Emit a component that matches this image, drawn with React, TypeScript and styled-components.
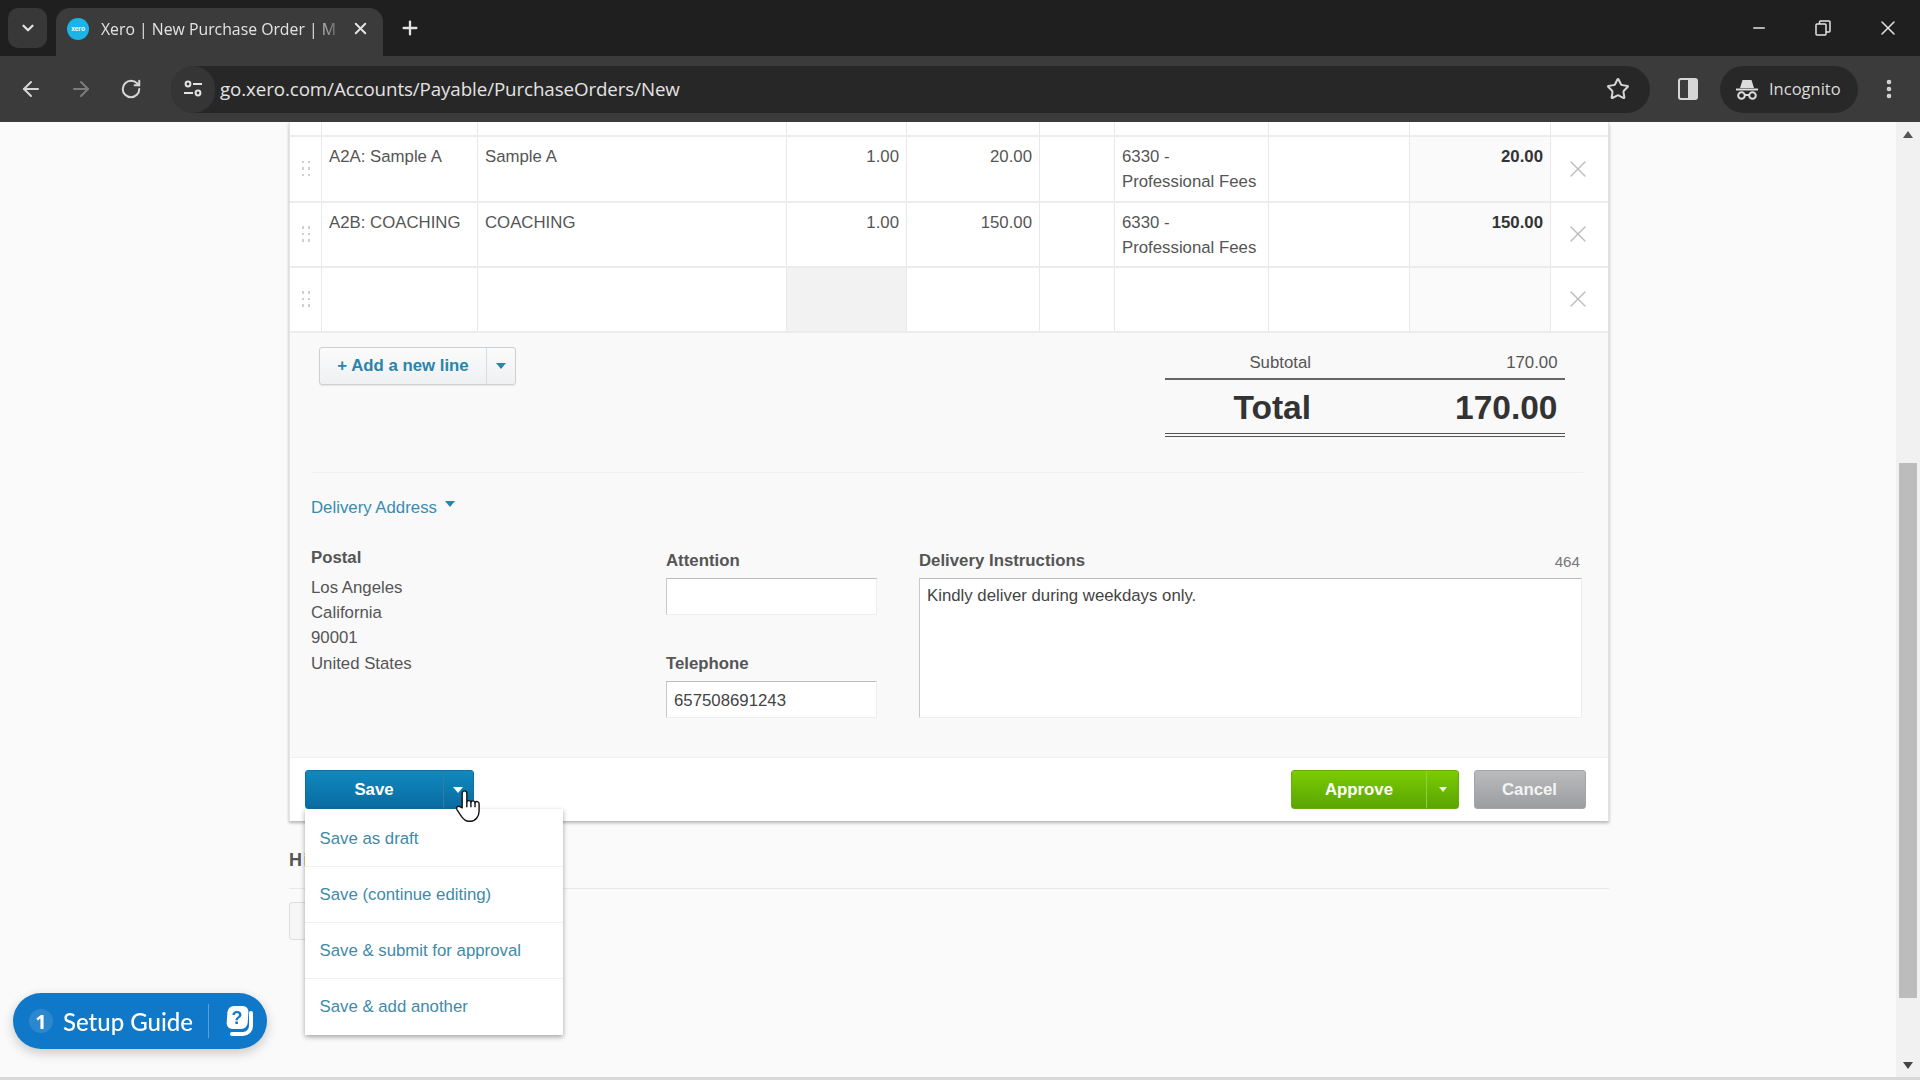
import React from "react";
import styled, { createGlobalStyle } from "styled-components";
import { ArrowLeft, ArrowRight, RotateCw, Star, EllipsisVertical, Minus, X, Plus, ChevronDown } from "lucide-react";

const Global = createGlobalStyle`
  html, body { margin: 0; padding: 0; height: 100%; overflow: hidden; background: #fafafa; }
  * { box-sizing: border-box; }
  body { font-family: "Liberation Sans", Arial, sans-serif; }
`;

const Shell = styled.div`
  width: 1920px; height: 1080px; display: flex; flex-direction: column; overflow: hidden;
`;
const TabStrip = styled.div`
  height: 56px; background: #1f1f1f; display: flex; align-items: flex-end; padding-left: 8px; color: #e3e3e3;
`;
const TabSwitcher = styled.div`
  width: 39px; height: 40px; margin-bottom: 8px; margin-right: 9px; background: #383838; border-radius: 10px;
  display: flex; align-items: center; justify-content: center;
`;
const Tab = styled.div`
  width: 327px; height: 48px; background: #3b3b3b; border-radius: 14px 14px 0 0; display: flex; align-items: center; padding: 0 12px 7px 11px;
  font: 400 15.8px "Open Sans", "Noto Sans", sans-serif;
`;
const Favicon = styled.div`
  width: 22px; height: 22px; border-radius: 50%; background: #19b5e6; color: #fff; font: 700 6.5px "Liberation Sans", sans-serif;
  display: flex; align-items: center; justify-content: center; margin-right: 12px; flex: none;
`;
const TabTitle = styled.div`
  width: 237px; white-space: nowrap; mask-image: linear-gradient(to right, #000 90%, rgba(0,0,0,.25) 100%);
`;
const TabClose = styled.div`
  width: 22px; margin-left: 11px; display: flex; justify-content: center;
`;
const NewTab = styled.div`
  width: 54px; height: 48px; padding-bottom: 8px; display: flex; align-items: center; justify-content: center;
`;
const Spacer = styled.div`flex: 1;`;
const WindowButton = styled.div`
  width: 64.5px; height: 56px; display: flex; align-items: center; justify-content: center;
`;
const Toolbar = styled.div`
  height: 66px; background: #3b3b3b; display: flex; align-items: center; padding-left: 6px; color: #d6d6d6;
`;
const NavSlot = styled.div<{ $dim?: boolean }>`
  width: 50px; display: flex; justify-content: center; color: ${p => (p.$dim ? "#7c7c7c" : "#d6d6d6")};
`;
const Address = styled.div`
  margin-left: 15px; width: 1479px; height: 47px; background: #272727; border-radius: 24px; display: flex; align-items: center; padding-right: 20px;
`;
const SiteChip = styled.div`
  width: 44px; height: 47px; border-radius: 24px; background: #353535; display: flex; align-items: center; justify-content: center; flex: none;
`;
const Url = styled.div`
  margin-left: 5px; padding-bottom: 2px; flex: 1; font: 400 18.75px "Open Sans", "Noto Sans", sans-serif; color: #e3e3e3; letter-spacing: -0.1px;
`;
const PanelSlot = styled.div`
  width: 70px; padding-left: 6px; display: flex; justify-content: center;
`;
const IncognitoPill = styled.div`
  width: 137.5px; height: 47px; border-radius: 24px; background: #282828; display: flex; align-items: center; padding-left: 15px; gap: 10px;
  font: 400 16.5px "Open Sans", "Noto Sans", sans-serif; color: #dcdcdc;
`;
const IncognitoLabel = styled.span`
  padding-bottom: 2px;
`;
const MenuSlot = styled.div`
  flex: 1; display: flex; justify-content: center;
`;

const PageArea = styled.div`
  height: 955px; display: flex; background: #fafafa;
`;
const Main = styled.main`
  flex: 1; padding-left: 289px; overflow: hidden;
`;
const Card = styled.section`
  width: 1320px; background: #f9f9fa; border-right: 1px solid #e4e4e4; border-left: 1px solid #e4e4e4; box-shadow: 0 2px 3px rgba(0,0,0,.28);
`;
const Row = styled.div<{ $h: number }>`
  display: grid; grid-template-columns: 32px 156px 309px 120px 133px 75px 154px 141px 141px 57px;
  height: ${p => p.$h}px; background: #fff; border-bottom: 2px solid #ececec;
`;
const Cell = styled.div<{ $right?: boolean; $bold?: boolean; $bg?: string; $last?: boolean }>`
  padding: 7px 7px 0 7px; font-size: 16.8px; line-height: 25px; color: ${p => (p.$bold ? "#333" : "#555")};
  font-weight: ${p => (p.$bold ? 700 : 400)}; text-align: ${p => (p.$right ? "right" : "left")};
  background: ${p => p.$bg || "transparent"}; border-right: ${p => (p.$last ? "0" : "1.5px solid #e8e8ea")}; white-space: nowrap;
  overflow: hidden;
`;
const IconCell = styled.div<{ $last?: boolean }>`
  display: flex; align-items: center; justify-content: center; padding-right: ${p => (p.$last ? "4px" : "0")};
  border-right: ${p => (p.$last ? "0" : "1.5px solid #e8e8ea")}; color: #bdbdbd;
`;
const Grip = styled.div`
  display: grid; grid-template-columns: 2px 2px; gap: 4px 4px;
`;
const GripDot = styled.span`
  width: 2.5px; height: 2.5px; background: #cfcfcf; display: block;
`;
const TotalsBand = styled.div`
  height: 140.5px; margin: 0 25px 0 21px; padding: 14.5px 18px 0 8px; display: flex; justify-content: space-between; align-items: flex-start; border-bottom: 1px solid #efefef;
`;
const SplitLight = styled.div`
  display: flex; height: 38px; width: 197px; border: 1px solid #ccd1d5; border-radius: 3px; background: linear-gradient(#fbfbfb, #eef0f2); box-shadow: 0 1px 1px rgba(0,0,0,.08);
`;
const AddLabel = styled.div`
  width: 167px; display: flex; align-items: center; justify-content: center; color: #2a84ab; font-weight: 700; font-size: 16.8px; border-right: 1px solid #d9dcdf;
`;
const CaretArea = styled.div`
  flex: 1; display: flex; align-items: center; justify-content: center;
`;
const Caret = styled.span<{ $color: string; $size?: number }>`
  display: block; width: 0; height: 0; border-left: ${p => p.$size ?? 5}px solid transparent; border-right: ${p => p.$size ?? 5}px solid transparent;
  border-top: ${p => (p.$size ?? 5) + 1}px solid ${p => p.$color};
`;
const Totals = styled.div`
  width: 400px;
`;
const SubtotalRow = styled.div`
  height: 33px; display: grid; grid-template-columns: 146px 1fr; padding: 0 7.5px 0 0; align-items: center; font-size: 16.8px; color: #555; text-align: right; border-bottom: 2px solid #666;
`;
const TotalRow = styled.div`
  height: 57px; display: grid; grid-template-columns: 146px 1fr; padding: 3px 7.5px 0 0; align-items: center; font-size: 33.5px; font-weight: 700; color: #333; text-align: right; border-bottom: 4px double #555;
`;
const DeliverySection = styled.div`
  padding: 25px 26px 39px 21px;
`;
const DeliveryToggle = styled.div`
  display: flex; align-items: flex-start; gap: 8px; height: 20px; line-height: 20px; color: #3a8bb0; font-size: 16.8px;
`;
const ToggleCaret = styled.span`
  display: block; margin-top: 3px;
`;
const DeliveryGrid = styled.div`
  display: grid; grid-template-columns: 355px 253px 1fr; margin-top: 29px;
`;
const PostalTitle = styled.div`
  margin-top: 1px; font-size: 16.8px; line-height: 20px; font-weight: 700; color: #555;
`;
const AddressLines = styled.div`
  margin-top: 7px; font-size: 16.8px; line-height: 25.2px; color: #555;
`;
const Field = styled.div<{ $mt?: number }>`
  margin-top: ${p => p.$mt ?? 0}px;
`;
const FieldHead = styled.div`
  display: flex; justify-content: space-between; padding-top: 4px; height: 23px; line-height: 20px; font-size: 16.8px; font-weight: 700; color: #555; margin-bottom: 8px;
`;
const Count = styled.span`
  font-weight: 400; font-size: 15.2px; color: #777; padding-top: 1px; padding-right: 2px;
`;
const Input = styled.div<{ $h?: number }>`
  width: ${p => (p.$h ? "100%" : "211px")}; height: ${p => p.$h ?? 37}px; background: #fff; border: 1px solid #eee; border-top: 1.5px solid #bcbcbc; border-left: 1px solid #c8c8c8;
  padding: 0 7px; font-size: 16.8px; color: #444; line-height: ${p => (p.$h ? "34px" : "37px")};
`;
const Footer = styled.div`
  height: 64px; background: #fff; border-top: 1px solid #f0f0f0; padding: 12px 22.5px 0 14.5px; display: flex; justify-content: space-between; align-items: flex-start;
`;
const SaveGroup = styled.div`
  position: relative;
`;
const SplitButton = styled.div<{ $width: number; $from: string; $to: string; $edge: string }>`
  width: ${p => p.$width}px; height: 39px; display: flex; border-radius: 3px; color: #fff; font-weight: 700; font-size: 16.8px;
  background: linear-gradient(${p => p.$from}, ${p => p.$to}); border: 1px solid ${p => p.$edge};
`;
const SplitMain = styled.div<{ $width: number; $edge: string }>`
  width: ${p => p.$width}px; display: flex; align-items: center; justify-content: center; border-right: 1px solid ${p => p.$edge};
`;
const FooterRight = styled.div`
  display: flex; gap: 14.5px;
`;
const CancelButton = styled.div`
  width: 112px; height: 39px; border-radius: 3px; background: linear-gradient(#b9bbbd, #9b9da0); border: 1px solid #a3a5a8; color: #f4f4f4;
  font-weight: 700; font-size: 16.8px; display: flex; align-items: center; justify-content: center;
`;
const SaveMenu = styled.div`
  position: absolute; left: 0; top: 39px; width: 258px; padding-top: 2px; background: #fff; box-shadow: 0 2px 5px rgba(0,0,0,.35); z-index: 5;
`;
const SaveItem = styled.div`
  height: 56px; padding-left: 15px; display: flex; align-items: center; color: #3f8aa8; font-size: 16.8px; border-bottom: 1px solid #f0f0f0;
  &:last-child { border-bottom: 0; }
`;
const HandCursor = styled.div`
  position: absolute; left: 149px; top: 18px; z-index: 6; line-height: 0;
`;
const History = styled.div`
  width: 1320px; margin-top: 29px;
`;
const HistoryTitle = styled.div`
  font-size: 18px; letter-spacing: 1.5px; font-weight: 700; line-height: 20px; color: #555; padding-bottom: 18px; border-bottom: 1px solid #e8e8e8;
`;
const HistoryButton = styled.div`
  margin-top: 13px; width: 180px; height: 38px; border: 1px solid #ddd; border-radius: 3px; background: #f6f6f6; font-size: 16.8px; line-height: 36px; padding-left: 30px; color: #666;
`;
const Track = styled.div`
  width: 24px; background: #f1f1f1; display: flex; flex-direction: column; align-items: center; padding: 9px 0 8px;
`;
const Thumb = styled.div`
  width: 18px; height: 535px; margin-top: 325px; background: #bcbcbc;
`;
const ArrowUp = styled.span`
  width: 0; height: 0; border-left: 5px solid transparent; border-right: 5px solid transparent; border-bottom: 7px solid #555;
`;
const ArrowDown = styled.span`
  width: 0; height: 0; margin-top: auto; border-left: 5px solid transparent; border-right: 5px solid transparent; border-top: 7px solid #444;
`;
const BottomStrip = styled.div`
  height: 3px; background: #d8d8d8;
`;
const SetupGuide = styled.div`
  position: fixed; left: 13px; bottom: 31px; width: 254px; height: 56px; border-radius: 28px; background: #0f78c8; color: #fff; display: flex; align-items: center;
  box-shadow: 0 4px 12px rgba(0,0,0,.2); padding-left: 16px; font: 500 24px Lato, "Noto Sans", sans-serif;
`;
const StepBadge = styled.div`
  width: 24px; height: 24px; border-radius: 50%; background: rgba(255,255,255,.12); display: flex; align-items: center; justify-content: center; font: 700 20px "Noto Sans", sans-serif; margin-right: 10px;
`;
const GuideLabel = styled.div`
  width: 145px; white-space: nowrap;
`;
const GuideDivider = styled.div`
  width: 1px; height: 34px; background: rgba(255,255,255,.3); margin-right: 14px;
`;

const GripIcon = () => (
  <IconCell>
    <Grip>{[0, 1, 2, 3, 4, 5].map(i => <GripDot key={i} />)}</Grip>
  </IconCell>
);
const Remove = () => (
  <IconCell $last><X size={28} strokeWidth={1.15} /></IconCell>
);

const lines = [
  { code: "A2A: Sample A", desc: "Sample A", qty: "1.00", price: "20.00", total: "20.00", h: 66 },
  { code: "A2B: COACHING", desc: "COACHING", qty: "1.00", price: "150.00", total: "150.00", h: 65 },
];

export default function App() {
  return (
    <Shell>
      <Global />
      <TabStrip>
        <TabSwitcher><ChevronDown size={18} strokeWidth={3} /></TabSwitcher>
        <Tab>
          <Favicon>xero</Favicon>
          <TabTitle>Xero | New Purchase Order | M</TabTitle>
          <TabClose><X size={19} strokeWidth={2.5} /></TabClose>
        </Tab>
        <NewTab><Plus size={22} strokeWidth={2.5} /></NewTab>
        <Spacer />
        <WindowButton><Minus size={18} strokeWidth={2} /></WindowButton>
        <WindowButton>
          <svg width="18" height="18" viewBox="0 0 18 18" fill="none" stroke="#e3e3e3" strokeWidth="1.5">
            <rect x="2" y="5" width="10" height="11" rx="1" />
            <path d="M5.5 5V3a1 1 0 0 1 1-1H15a1 1 0 0 1 1 1v9a1 1 0 0 1-1 1h-3" />
          </svg>
        </WindowButton>
        <WindowButton><X size={24} strokeWidth={1.5} /></WindowButton>
      </TabStrip>
      <Toolbar>
        <NavSlot><ArrowLeft size={24} strokeWidth={2} /></NavSlot>
        <NavSlot $dim><ArrowRight size={24} strokeWidth={2} /></NavSlot>
        <NavSlot><RotateCw size={22} strokeWidth={2.2} /></NavSlot>
        <Address>
          <SiteChip>
            <svg width="20" height="20" viewBox="0 0 20 20" fill="none" stroke="#e3e3e3" strokeWidth="2">
              <circle cx="5" cy="5" r="2.4" />
              <path d="M10 5h9M1 14h9" />
              <circle cx="15" cy="14" r="2.4" />
            </svg>
          </SiteChip>
          <Url>go.xero.com/Accounts/Payable/PurchaseOrders/New</Url>
          <Star size={24} strokeWidth={2} color="#d6d6d6" />
        </Address>
        <PanelSlot>
          <svg width="20" height="22" viewBox="0 0 20 22">
            <rect x="1" y="1" width="18" height="20" rx="2" fill="none" stroke="#d6d6d6" strokeWidth="2" />
            <rect x="10" y="1" width="9" height="20" fill="#d6d6d6" />
          </svg>
        </PanelSlot>
        <IncognitoPill>
          <svg width="24" height="24" viewBox="0 0 24 24" fill="none" stroke="#dcdcdc" strokeWidth="2">
            <path d="M1 12.5h22" />
            <path d="M5 11 7.5 3h9L19 11z" fill="#dcdcdc" stroke="none" />
            <circle cx="6.5" cy="18.5" r="3.3" />
            <circle cx="17.5" cy="18.5" r="3.3" />
            <path d="M10 18h4" />
          </svg>
          <IncognitoLabel>Incognito</IncognitoLabel>
        </IncognitoPill>
        <MenuSlot><EllipsisVertical size={24} strokeWidth={2.6} /></MenuSlot>
      </Toolbar>
      <PageArea>
        <Main>
          <Card>
            <Row $h={14.5}>
              {Array.from({ length: 9 }).map((_, i) => <Cell key={i} />)}
              <Cell $last />
            </Row>
            {lines.map(l => (
              <Row key={l.code} $h={l.h}>
                <GripIcon />
                <Cell>{l.code}</Cell>
                <Cell>{l.desc}</Cell>
                <Cell $right>{l.qty}</Cell>
                <Cell $right>{l.price}</Cell>
                <Cell />
                <Cell>6330 -<br />Professional Fees</Cell>
                <Cell />
                <Cell $right $bold $bg="#fafafa">{l.total}</Cell>
                <Remove />
              </Row>
            ))}
            <Row $h={65}>
              <GripIcon />
              <Cell />
              <Cell />
              <Cell $bg="#f2f2f2" />
              <Cell />
              <Cell />
              <Cell />
              <Cell />
              <Cell $bg="#fafafa" />
              <Remove />
            </Row>
            <TotalsBand>
              <SplitLight>
                <AddLabel>+ Add a new line</AddLabel>
                <CaretArea><Caret $color="#2a84ab" /></CaretArea>
              </SplitLight>
              <Totals>
                <SubtotalRow><span>Subtotal</span><span>170.00</span></SubtotalRow>
                <TotalRow><span>Total</span><span>170.00</span></TotalRow>
              </Totals>
            </TotalsBand>
            <DeliverySection>
              <DeliveryToggle>
                Delivery Address
                <ToggleCaret><Caret $color="#2a84ab" /></ToggleCaret>
              </DeliveryToggle>
              <DeliveryGrid>
                <div>
                  <PostalTitle>Postal</PostalTitle>
                  <AddressLines>Los Angeles<br />California<br />90001<br />United States</AddressLines>
                </div>
                <div>
                  <Field>
                    <FieldHead>Attention</FieldHead>
                    <Input />
                  </Field>
                  <Field $mt={34.5}>
                    <FieldHead>Telephone</FieldHead>
                    <Input>657508691243</Input>
                  </Field>
                </div>
                <Field>
                  <FieldHead>Delivery Instructions<Count>464</Count></FieldHead>
                  <Input $h={140}>Kindly deliver during weekdays only.</Input>
                </Field>
              </DeliveryGrid>
            </DeliverySection>
            <Footer>
              <SaveGroup>
                <SplitButton $width={169} $from="#1089bf" $to="#0a6ba1" $edge="#0c6f9f">
                  <SplitMain $width={138} $edge="#2f7ea6">Save</SplitMain>
                  <CaretArea><Caret $color="#fff" /></CaretArea>
                </SplitButton>
                <HandCursor>
                  <svg width="28" height="35" viewBox="0 0 24 30" fill="#fff" stroke="#111" strokeWidth="1.2" strokeLinejoin="round">
                    <path d="M7 17V4.5a2 2 0 0 1 4 0V12a1.9 1.9 0 0 1 3.5 0 1.9 1.9 0 0 1 3.5.5 1.9 1.9 0 0 1 3.5 1V20c0 4-3 8.5-7 8.5h-2c-3 0-4.5-2-6-4l-4-6c-1-2 1-3.5 2.5-2.5z" />
                    <path d="M11 12v4.5M14.5 12v4.5M18 12.5v4" fill="none" />
                  </svg>
                </HandCursor>
                <SaveMenu>
                  <SaveItem>Save as draft</SaveItem>
                  <SaveItem>Save (continue editing)</SaveItem>
                  <SaveItem>Save &amp; submit for approval</SaveItem>
                  <SaveItem>Save &amp; add another</SaveItem>
                </SaveMenu>
              </SaveGroup>
              <FooterRight>
                <SplitButton $width={168} $from="#7ccb02" $to="#5aa503" $edge="#68ae0a">
                  <SplitMain $width={135} $edge="#8fcf45">Approve</SplitMain>
                  <CaretArea><Caret $color="#e8f6d6" $size={4} /></CaretArea>
                </SplitButton>
                <CancelButton>Cancel</CancelButton>
              </FooterRight>
            </Footer>
          </Card>
          <History>
            <HistoryTitle>History &amp; Notes</HistoryTitle>
            <HistoryButton>Show History</HistoryButton>
          </History>
        </Main>
        <Track>
          <ArrowUp />
          <Thumb />
          <ArrowDown />
        </Track>
      </PageArea>
      <BottomStrip />
      <SetupGuide>
        <StepBadge>1</StepBadge>
        <GuideLabel>Setup Guide</GuideLabel>
        <GuideDivider />
        <svg width="32" height="34" viewBox="0 0 32 34">
          <path d="M28 9v13a8 8 0 0 1-8 8H9" fill="none" stroke="#fff" strokeWidth="4" strokeLinecap="round" />
          <rect x="3" y="2" width="21" height="23" rx="6" fill="#fff" transform="skewX(-4) translate(2 0)" />
          <text x="14" y="20" fontSize="18" fontWeight="700" fontFamily="Liberation Sans" textAnchor="middle" fill="#0f78c8">?</text>
        </svg>
      </SetupGuide>
    </Shell>
  );
}
